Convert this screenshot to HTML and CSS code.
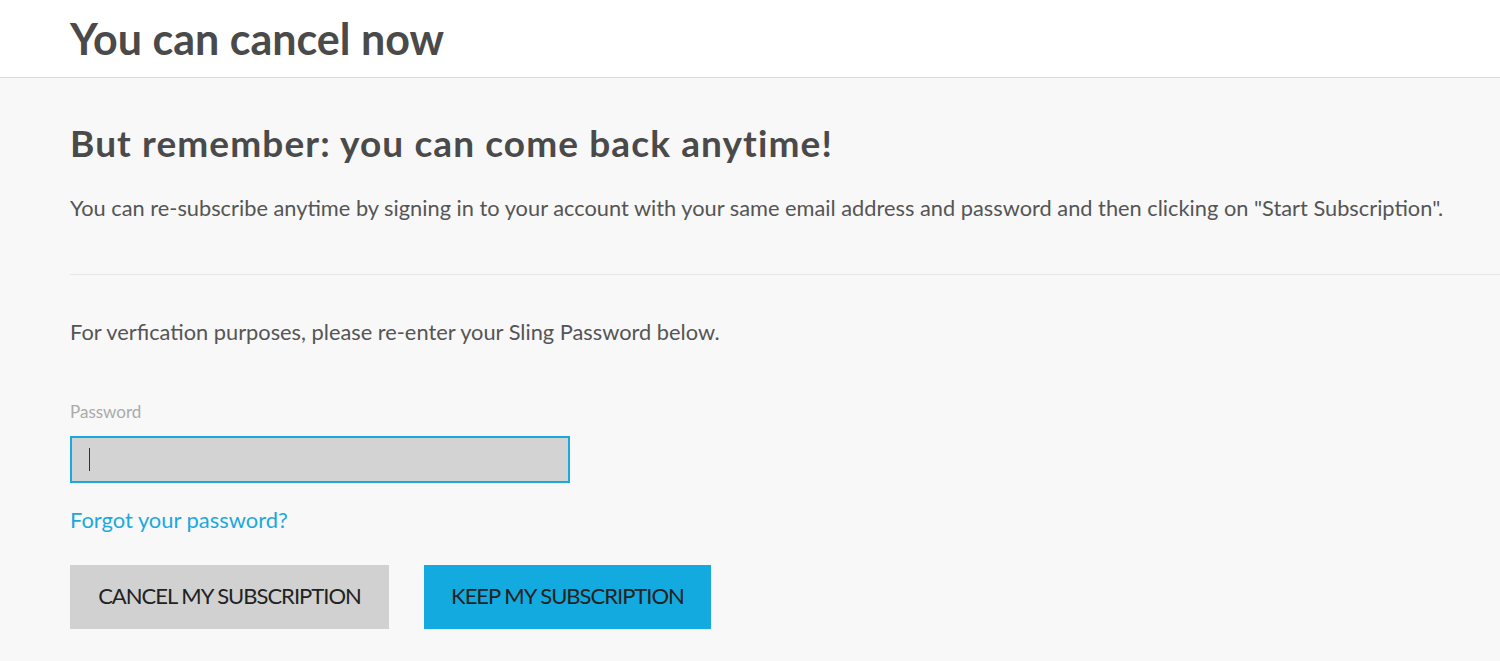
FILE: index.html
```html
<!DOCTYPE html>
<html>
<head>
<meta charset="utf-8">
<link rel="stylesheet" href="styles.css">
</head>
<body>
<header class="top">
  <h1 class="title">You can cancel now</h1>
</header>
<main class="content">
  <section class="intro">
    <h2 class="subtitle">But remember: you can come back anytime!</h2>
    <p class="text">You can re-subscribe anytime by signing in to your account with your same email address and password and then clicking on "Start Subscription".</p>
  </section>
  <hr class="divider">
  <section class="verify">
    <p class="text">For verfication purposes, please re-enter your Sling Password below.</p>
    <label class="label" for="pw">Password</label>
    <div class="input"><span class="caret"></span></div>
    <a class="forgot" href="#">Forgot your password?</a>
    <div class="actions">
      <button class="btn btn-cancel">CANCEL MY SUBSCRIPTION</button>
      <button class="btn btn-keep">KEEP MY SUBSCRIPTION</button>
    </div>
  </section>
</main>
</body>
</html>
```
FILE: styles.css
```css
* { box-sizing: border-box; }
html, body { margin: 0; padding: 0; }
body {
  font-family: Lato, "Open Sans", sans-serif;
  background: #f8f8f8;
  color: #555;
  height: 661px;
  overflow: hidden;
}
.top {
  background: #fff;
  border-bottom: 1px solid #dadada;
  height: 78px;
  padding-left: 70px;
}
.title {
  margin: 0;
  padding-top: 13px;
  font-size: 43px;
  line-height: 52px;
  font-weight: 700;
  color: #4a4a4a;
}
.content {
  padding-left: 70px;
}
.intro {
  padding-top: 38px;
}
.subtitle {
  margin: 0;
  font-size: 37px;
  line-height: 54px;
  font-weight: 700;
  color: #4a4a4a;
  letter-spacing: 1.1px;
}
.text {
  margin: 0;
  font-size: 21.8px;
  line-height: 28px;
  color: #555;
}
.intro .text { margin-top: 24px; }
.divider {
  border: 0;
  border-top: 1px solid #e6e6e6;
  margin: 52px 0 0 0;
}
.verify { padding-top: 43px; display: flex; flex-direction: column; align-items: flex-start; }
.label {
  margin-top: 56px;
  font-size: 17px;
  line-height: 20px;
  color: #aaa;
}
.input {
  margin-top: 14px;
  width: 500px;
  height: 47px;
  background: #d3d3d3;
  border: 2px solid #1aa9df;
  display: flex;
  align-items: center;
  padding-left: 17px;
}
.caret {
  width: 1px;
  height: 23px;
  background: #333;
}
.forgot {
  margin-top: 23px;
  font-size: 21.9px;
  line-height: 28px;
  color: #1ba9dd;
  text-decoration: none;
}
.actions {
  margin-top: 31px;
  display: flex;
  gap: 35px;
}
.btn {
  height: 64px;
  border: 0;
  font-family: Lato, sans-serif;
  font-size: 22px;
  color: #222;
  letter-spacing: -1px;
  padding: 0 0 3px 0;
}
.btn-cancel { width: 319px; background: #d1d1d1; }
.btn-keep { width: 287px; background: #12aadf; }
```
